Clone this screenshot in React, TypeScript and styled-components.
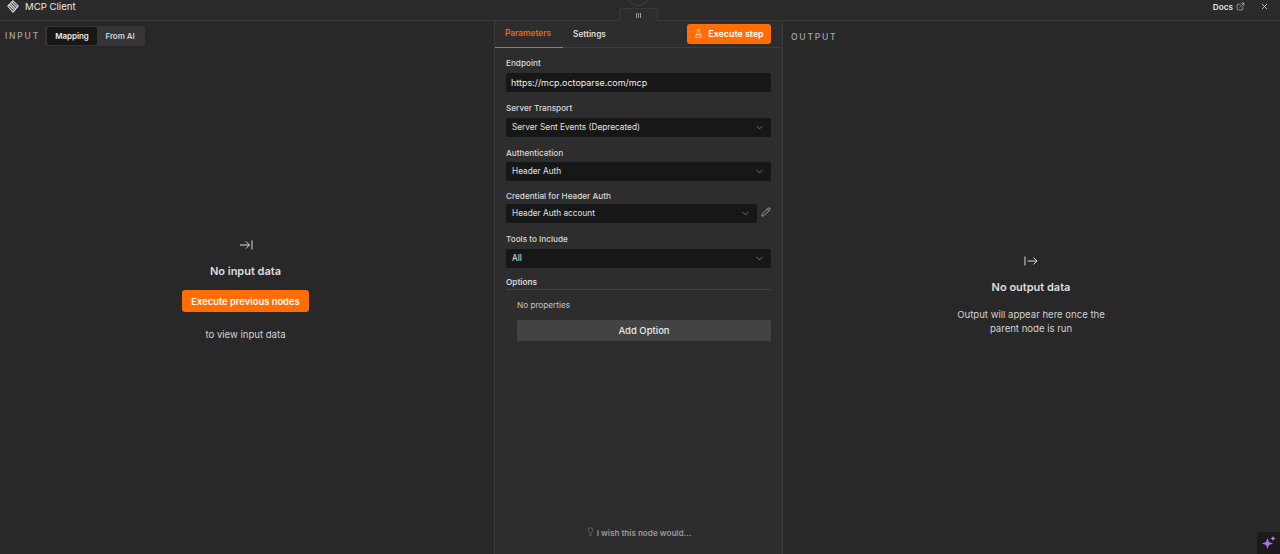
import React from "react";
import styled, { createGlobalStyle } from "styled-components";
import { ChevronDown, ExternalLink, FlaskConical, Lightbulb, Pencil, X } from "lucide-react";

const Global = createGlobalStyle`
  html, body { margin: 0; padding: 0; height: 100%; background: #282828; }
  #root { height: 554px; overflow: hidden; }
  * { box-sizing: border-box; }
`;

const Page = styled.div`
  position: relative;
  width: 1280px;
  height: 554px;
  display: flex;
  flex-direction: column;
  overflow: hidden;
  background: #282828;
  color: #e2e2e2;
  font-family: Inter, "Liberation Sans", sans-serif;
  -webkit-font-smoothing: antialiased;
`;

const Header = styled.header`
  height: 21px;
  flex: none;
  display: flex;
  align-items: center;
  justify-content: space-between;
  padding: 0 11px 7px 7px;
  background: #2a2a2a;
  border-bottom: 1px solid #3a3a3a;
`;

const HeaderTitle = styled.div`
  display: flex;
  align-items: center;
  gap: 6px;
  font-size: 9.6px;
  color: #e8e8e8;
`;

const HeaderActions = styled.div`
  display: flex;
  align-items: center;
  gap: 15px;
`;

const DocsLink = styled.span`
  display: flex;
  align-items: center;
  gap: 3px;
  font-size: 8.2px;
  font-weight: 600;
  color: #e0e0e0;
`;

const Columns = styled.div`
  flex: 1;
  min-height: 0;
  display: grid;
  grid-template-columns: 494px 289px 497px;
`;

const SidePanel = styled.section`
  display: flex;
  flex-direction: column;
  min-height: 0;
`;

const InputBar = styled.div`
  height: 26px;
  margin-top: 5px;
  display: flex;
  align-items: flex-start;
  gap: 5px;
  padding-left: 5px;
`;

const PanelLabel = styled.span<{ $offset?: number }>`
  font-size: 8.5px;
  font-weight: 500;
  letter-spacing: 1.8px;
  line-height: 20px;
  color: #a8a8a8;
  margin-left: ${(p) => p.$offset ?? 0}px;
  margin-top: ${(p) => (p.$offset ? 1 : 0)}px;
`;

const ModeSwitch = styled.div`
  display: flex;
  align-items: center;
  width: 100px;
  height: 20px;
  padding: 0 2px;
  background: #353535;
  border-radius: 3px;
`;

const ModeOption = styled.span<{ $active?: boolean }>`
  height: 18px;
  display: flex;
  align-items: center;
  justify-content: center;
  width: ${(p) => (p.$active ? 50 : 46)}px;
  font-size: 7.9px;
  font-weight: 600;
  border-radius: 3px;
  color: ${(p) => (p.$active ? "#ececec" : "#d4d4d4")};
  background: ${(p) => (p.$active ? "#171717" : "transparent")};
`;

const Empty = styled.div<{ $top: number; $shift?: number }>`
  flex: 1;
  display: flex;
  flex-direction: column;
  align-items: center;
  padding-top: ${(p) => p.$top}px;
  padding-right: ${(p) => p.$shift ?? 0}px;
`;

const EmptyIcon = styled.svg`
  width: 14px;
  height: 14px;
  display: block;
  fill: none;
  stroke: #d8d8d8;
  stroke-width: 1;
`;

const EmptyTitle = styled.div`
  margin-top: 12px;
  font-size: 11px;
  line-height: 14px;
  font-weight: 600;
  color: #dedede;
`;

const EmptyText = styled.div`
  font-size: 9.55px;
  line-height: 14px;
  color: #d2d2d2;
  text-align: center;
`;

const OutputText = styled(EmptyText)`
  margin-top: 14px;
  width: 165px;
`;

const OrangeButton = styled.button`
  border: 0;
  padding: 0;
  display: flex;
  align-items: center;
  justify-content: center;
  background: #ff6d04;
  color: #fff;
  font-family: inherit;
  font-weight: 600;
  border-radius: 3px;
`;

const PreviousButton = styled(OrangeButton)`
  width: 127px;
  height: 22px;
  margin: 12px 0 16px;
  font-size: 9.4px;
`;

const CenterPanel = styled.section`
  display: flex;
  flex-direction: column;
  min-height: 0;
  background: #2d2d2d;
  border-left: 1px solid #3a3a3a;
  border-right: 1px solid #3a3a3a;
`;

const TabRow = styled.div`
  height: 27px;
  flex: none;
  display: flex;
  align-items: center;
  padding-right: 11px;
  border-bottom: 1px solid #3d3d3d;
`;

const Tab = styled.span<{ $active?: boolean }>`
  height: 27px;
  display: flex;
  align-items: center;
  padding: 0 ${(p) => (p.$active ? 12 : 10)}px 1px 10px;
  margin-right: ${(p) => (p.$active ? 0 : "auto")};
  font-size: 8.3px;
  font-weight: 600;
  color: ${(p) => (p.$active ? "#e9680d" : "#dadada")};
  border-bottom: ${(p) => (p.$active ? "1px solid #e9680d" : "0")};
`;

const RunButton = styled(OrangeButton)`
  width: 84px;
  height: 20px;
  gap: 5px;
  font-size: 8.9px;
  margin-top: -1px;
`;

const Form = styled.div`
  flex: 1;
  display: flex;
  flex-direction: column;
  padding: 9px 11px 0;
  min-height: 0;
`;

const Label = styled.div<{ $mt?: number }>`
  margin-top: ${(p) => p.$mt ?? 0}px;
  height: 12px;
  font-size: 8.2px;
  line-height: 12px;
  font-weight: 500;
  color: #d8d8d8;
`;

const UrlInput = styled.div`
  margin-top: 4px;
  height: 18.5px;
  display: flex;
  align-items: center;
  padding-left: 5px;
  border-radius: 2px;
  background: #171717;
  font-size: 8.95px;
  color: #f0f0f0;
`;

const SelectRow = styled.div`
  display: flex;
  align-items: center;
  gap: 4px;
`;

const Select = styled.div<{ $mt: number }>`
  margin-top: ${(p) => p.$mt}px;
  height: 19px;
  display: flex;
  align-items: center;
  justify-content: space-between;
  padding: 0 6px;
  border-radius: 2px;
  background: #171717;
  font-size: 8.25px;
  color: #e2e2e2;

  svg {
    color: #a6a6a6;
  }

  ${SelectRow} > & {
    flex: 1;
  }
`;

const OptionsHead = styled.div`
  margin-top: 8px;
  height: 14px;
  font-size: 8.2px;
  line-height: 12px;
  font-weight: 600;
  color: #d8d8d8;
  border-bottom: 1px solid #414141;
`;

const OptionsBody = styled.div`
  margin-left: 11px;
  padding-top: 9px;
`;

const NoProperties = styled.div`
  font-size: 8.2px;
  line-height: 12px;
  color: #c4c4c4;
`;

const AddOption = styled.button`
  margin-top: 9px;
  width: 100%;
  height: 21px;
  display: block;
  border: 0;
  border-radius: 2px;
  background: #434343;
  color: #e8e8e8;
  font-family: inherit;
  font-size: 9.5px;
  font-weight: 500;
`;

const Wish = styled.div`
  margin-top: auto;
  height: 27px;
  display: flex;
  align-items: flex-start;
  justify-content: center;
  gap: 2px;
  font-size: 8.15px;
  line-height: 12px;
  font-weight: 600;
  color: #9a9a9a;
`;

const Handle = styled.div`
  position: absolute;
  left: 619px;
  top: 8px;
  width: 39px;
  height: 13px;
  display: flex;
  align-items: center;
  justify-content: center;
  gap: 1px;
  background: #2d2d2d;
  border: 1px solid #3a3a3a;
  border-bottom: 0;
  border-radius: 3px 3px 0 0;
`;

const Grip = styled.i`
  display: block;
  width: 1px;
  height: 5px;
  background: #9a9a9a;
`;

const TopCircle = styled.div`
  position: absolute;
  left: 626px;
  top: -18px;
  width: 24px;
  height: 24px;
  border-radius: 50%;
  border: 1px solid #3f3f3f;
`;

const AskButton = styled.div`
  position: absolute;
  right: 0;
  bottom: 0;
  width: 23px;
  height: 22px;
  display: flex;
  align-items: center;
  justify-content: center;
  background: #1b1b1b;
  border-radius: 3px 0 0 0;
`;

const Logo = () => (
  <svg width="12" height="13" viewBox="0 0 12 13" fill="none" stroke="#dcdcdc" strokeWidth="1.1">
    <path d="M6 .8 11.2 6 6 12.2.8 6Z" />
    <path d="M3.4 3.6 8.8 9M5 2.4l5.2 5.2M2.2 5l5 5" />
  </svg>
);

const Sparkle = () => (
  <svg width="16" height="16" viewBox="0 0 16 16" fill="#a970ee">
    <path d="M6.5 3 8 7l4 1.5L8 10l-1.5 4L5 10 1 8.5 5 7Z" />
    <path d="M12 1l.8 1.7 1.7.8-1.7.8L12 6l-.8-1.7-1.7-.8 1.7-.8Z" fill="#c78bf5" />
  </svg>
);

export default function App() {
  return (
    <Page>
      <Global />
      <Header>
        <HeaderTitle>
          <Logo />
          MCP Client
        </HeaderTitle>
        <HeaderActions>
          <DocsLink>
            Docs <ExternalLink size={9} strokeWidth={1.5} />
          </DocsLink>
          <X size={9} strokeWidth={2} color="#e0e0e0" />
        </HeaderActions>
      </Header>
      <TopCircle />
      <Handle>
        <Grip />
        <Grip />
        <Grip />
      </Handle>
      <Columns>
        <SidePanel>
          <InputBar>
            <PanelLabel>INPUT</PanelLabel>
            <ModeSwitch>
              <ModeOption $active>Mapping</ModeOption>
              <ModeOption>From AI</ModeOption>
            </ModeSwitch>
          </InputBar>
          <Empty $top={186} $shift={3}>
            <EmptyIcon viewBox="0 0 14 14">
              <path d="M1 7h9.5M7 3.5 10.5 7 7 10.5M13 2.5v9" />
            </EmptyIcon>
            <EmptyTitle>No input data</EmptyTitle>
            <PreviousButton>Execute previous nodes</PreviousButton>
            <EmptyText>to view input data</EmptyText>
          </Empty>
        </SidePanel>
        <CenterPanel>
          <TabRow>
            <Tab $active>Parameters</Tab>
            <Tab>Settings</Tab>
            <RunButton>
              <FlaskConical size={9} strokeWidth={1.6} />
              Execute step
            </RunButton>
          </TabRow>
          <Form>
            <Label>Endpoint</Label>
            <UrlInput>https://mcp.octoparse.com/mcp</UrlInput>
            <Label $mt={10}>Server Transport</Label>
            <Select $mt={4}>
              Server Sent Events (Deprecated)
              <ChevronDown size={11} strokeWidth={1.3} />
            </Select>
            <Label $mt={10}>Authentication</Label>
            <Select $mt={3}>
              Header Auth
              <ChevronDown size={11} strokeWidth={1.3} />
            </Select>
            <Label $mt={9}>Credential for Header Auth</Label>
            <SelectRow>
              <Select $mt={2}>
                Header Auth account
                <ChevronDown size={11} strokeWidth={1.3} />
              </Select>
              <Pencil size={10} strokeWidth={1.5} color="#d0d0d0" />
            </SelectRow>
            <Label $mt={10}>Tools to Include</Label>
            <Select $mt={4}>
              All
              <ChevronDown size={11} strokeWidth={1.3} />
            </Select>
            <OptionsHead>Options</OptionsHead>
            <OptionsBody>
              <NoProperties>No properties</NoProperties>
              <AddOption>Add Option</AddOption>
            </OptionsBody>
            <Wish>
              <Lightbulb size={9} strokeWidth={1.3} />I wish this node would...
            </Wish>
          </Form>
        </CenterPanel>
        <SidePanel>
          <InputBar>
            <PanelLabel $offset={3}>OUTPUT</PanelLabel>
          </InputBar>
          <Empty $top={202} $shift={1}>
            <EmptyIcon viewBox="0 0 14 14">
              <path d="M1 2.5v9M3.5 7H13M9.5 3.5 13 7l-3.5 3.5" />
            </EmptyIcon>
            <EmptyTitle>No output data</EmptyTitle>
            <OutputText>Output will appear here once the parent node is run</OutputText>
          </Empty>
        </SidePanel>
      </Columns>
      <AskButton>
        <Sparkle />
      </AskButton>
    </Page>
  );
}
